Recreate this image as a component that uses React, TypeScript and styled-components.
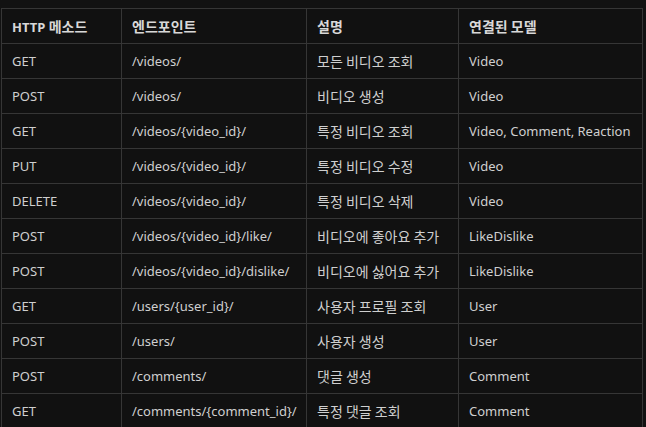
import React from "react";
import styled, { createGlobalStyle } from "styled-components";

const GlobalStyle = createGlobalStyle`
  html, body {
    margin: 0;
    padding: 0;
    background: #121212;
  }
  body {
    font-family: "Noto Sans", "Noto Sans CJK KR", sans-serif;
  }
`;

const Page = styled.div`
  padding: 8px 5px 0 1px;
  background: #121212;
  min-height: 427px;
  box-sizing: border-box;
`;

const Table = styled.table`
  border-collapse: collapse;
  width: 641px;
  table-layout: fixed;
  background: #111111;
  font-size: 13px;
  color: #cfcfcf;
`;

const HeadCell = styled.th<{ $w: number }>`
  width: ${(p) => p.$w}px;
  height: 35px;
  box-sizing: border-box;
  border: 1px solid #363636;
  padding: 0 10px;
  text-align: left;
  font-weight: 700;
  color: #d8d8d8;
  white-space: nowrap;
`;

const Cell = styled.td`
  height: 35px;
  box-sizing: border-box;
  border: 1px solid #363636;
  padding: 0 10px;
  white-space: nowrap;
`;

const Hangul = styled.span`
  font-family: "Noto Sans CJK KR", sans-serif;
  font-size: 14px;
`;

function Text({ value }: { value: string }) {
  const parts = value.split(/([\uAC00-\uD7A3][\uAC00-\uD7A3 ]*[\uAC00-\uD7A3]|[\uAC00-\uD7A3])/);
  return (
    <>
      {parts.map((p, i) =>
        i % 2 === 1 ? <Hangul key={i}>{p}</Hangul> : p ? <React.Fragment key={i}>{p}</React.Fragment> : null
      )}
    </>
  );
}

const columns = [
  { label: "HTTP 메소드", w: 120 },
  { label: "엔드포인트", w: 185 },
  { label: "설명", w: 152 },
  { label: "연결된 모델", w: 184 },
];

const rows: [string, string, string, string][] = [
  ["GET", "/videos/", "모든 비디오 조회", "Video"],
  ["POST", "/videos/", "비디오 생성", "Video"],
  ["GET", "/videos/{video_id}/", "특정 비디오 조회", "Video, Comment, Reaction"],
  ["PUT", "/videos/{video_id}/", "특정 비디오 수정", "Video"],
  ["DELETE", "/videos/{video_id}/", "특정 비디오 삭제", "Video"],
  ["POST", "/videos/{video_id}/like/", "비디오에 좋아요 추가", "LikeDislike"],
  ["POST", "/videos/{video_id}/dislike/", "비디오에 싫어요 추가", "LikeDislike"],
  ["GET", "/users/{user_id}/", "사용자 프로필 조회", "User"],
  ["POST", "/users/", "사용자 생성", "User"],
  ["POST", "/comments/", "댓글 생성", "Comment"],
  ["GET", "/comments/{comment_id}/", "특정 댓글 조회", "Comment"],
];

export default function App() {
  return (
    <>
      <GlobalStyle />
      <Page>
        <Table>
          <thead>
            <tr>
              {columns.map((c) => (
                <HeadCell key={c.label} $w={c.w}>
                  <Text value={c.label} />
                </HeadCell>
              ))}
            </tr>
          </thead>
          <tbody>
            {rows.map((r, i) => (
              <tr key={i}>
                {r.map((v, j) => (
                  <Cell key={j}>
                    <Text value={v} />
                  </Cell>
                ))}
              </tr>
            ))}
          </tbody>
        </Table>
      </Page>
    </>
  );
}
